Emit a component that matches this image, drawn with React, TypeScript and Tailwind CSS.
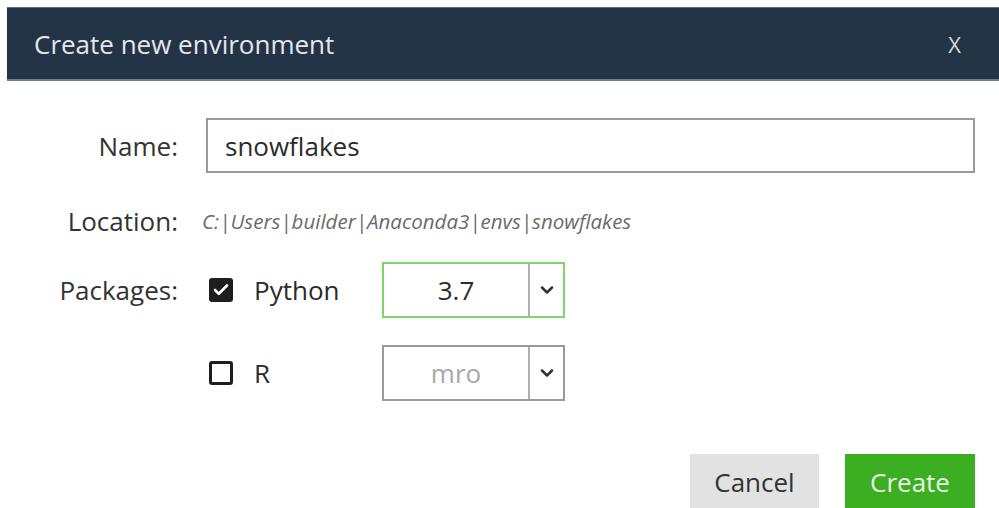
import { Check, ChevronDown } from "lucide-react";

const font = { fontFamily: '"Open Sans", "DejaVu Sans", sans-serif' };

function Checkbox({ checked }: { checked: boolean }) {
  return (
    <div
      className={
        "w-[24px] h-[24px] rounded-[3px] border-[3px] border-[#1e1e1e] flex items-center justify-center " +
        (checked ? "bg-[#1e1e1e]" : "bg-white")
      }
    >
      {checked && <Check size={18} strokeWidth={3.5} className="text-white" />}
    </div>
  );
}

function Select({ value, active, muted }: { value: string; active?: boolean; muted?: boolean }) {
  return (
    <div
      className={
        "w-[183px] h-[56px] flex border-2 " + (active ? "border-[#7ed36b]" : "border-[#9a9a9a]")
      }
    >
      <div
        className={
          "flex-1 flex items-center justify-center text-[26px] leading-none " +
          (muted ? "text-[#a8a8a8]" : "text-[#2b2b2b]")
        }
      >
        {value}
      </div>
      <div className="w-[35px] border-l-2 border-[#b0b0b0] flex items-center justify-center">
        <ChevronDown size={20} strokeWidth={3} className="text-[#333]" />
      </div>
    </div>
  );
}

export default function App() {
  return (
    <div className="w-[999px] h-[508px] overflow-hidden bg-white pt-[7px] pl-[7px]" style={font}>
      <div className="h-[74px] bg-[#243447] border-t border-[#5b6e80] border-b-2 border-b-[#6a7f93] flex items-center justify-between pl-[27px] pr-[38px]">
        <div className="text-[26px] leading-none text-[#e4e7ea]">Create new environment</div>
        <div className="text-[22px] leading-none text-[#d5d9dd]">X</div>
      </div>

      <div className="flex items-center mt-[37px]">
        <div className="w-[171px] text-right text-[26px] leading-none text-[#333]">Name:</div>
        <div className="ml-[28px] w-[769px] h-[55px] border-2 border-[#9a9a9a] flex items-center pl-[17px] text-[26px] leading-none text-[#2b2b2b]">
          snowflakes
        </div>
      </div>

      <div className="flex items-center mt-[33px] h-[30px]">
        <div className="w-[171px] text-right text-[26px] leading-none text-[#333]">Location:</div>
        <div className="ml-[24px] text-[20.5px] leading-none italic text-[#6b6b6b]">
          C:|Users|builder|Anaconda3|envs|snowflakes
        </div>
      </div>

      <div className="flex items-center mt-[26px]">
        <div className="w-[171px] text-right text-[26px] leading-none text-[#333]">Packages:</div>
        <div className="ml-[31px]">
          <Checkbox checked />
        </div>
        <div className="ml-[21px] w-[128px] text-[26px] leading-none text-[#2b2b2b]">Python</div>
        <Select value="3.7" active />
      </div>

      <div className="flex items-center mt-[27px]">
        <div className="w-[171px]" />
        <div className="ml-[31px]">
          <Checkbox checked={false} />
        </div>
        <div className="ml-[21px] w-[128px] text-[26px] leading-none text-[#2b2b2b]">R</div>
        <Select value="mro" muted />
      </div>

      <div className="flex justify-end gap-[26px] mt-[53px] pr-[24px]">
        <button className="w-[129px] h-[60px] bg-[#e2e2e2] text-[26px] leading-none text-[#333] pb-[4px]">Cancel</button>
        <button className="w-[130px] h-[60px] bg-[#3cae22] text-[26px] leading-none text-[#e8f5e4] pb-[4px]">Create</button>
      </div>
    </div>
  );
}
